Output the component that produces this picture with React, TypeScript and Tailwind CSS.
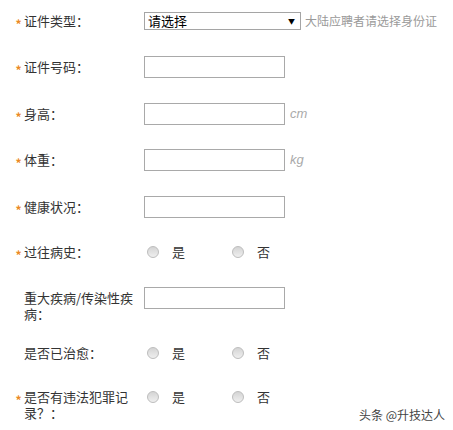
import React from 'react';

const FONT = { fontFamily: '"Noto Sans CJK SC", "Liberation Sans", sans-serif' };

function Star({ show }: { show?: boolean }) {
  return (
    <span className="w-[11px] h-[16px] shrink-0 pt-[3px] text-center text-[12px] leading-[16px] font-bold text-[#eb8a24]">
      {show ? '*' : ''}
    </span>
  );
}

function Label({ text, required }: { text: string; required?: boolean }) {
  return (
    <div className="flex items-start pt-[3px]">
      <Star show={required} />
      <div className="w-[112px] mr-[8px] text-[13px] leading-[16px] text-[#333]">{text}</div>
    </div>
  );
}

function TextInput() {
  return <div className="w-[141px] h-[22px] border border-[#a9a9a9] bg-white" />;
}

function Radio({ label }: { label: string }) {
  return (
    <div className="flex items-center">
      <span className="ml-[3px] w-[12px] h-[12px] rounded-full border border-[#bdbdbd] bg-gradient-to-b from-[#d4d4d4] to-[#efefef]" />
      <span className="ml-[13px] text-[13px] text-[#333]">{label}</span>
    </div>
  );
}

function RadioPair() {
  return (
    <div className="flex items-center h-[22px]">
      <div className="w-[85px]">
        <Radio label="是" />
      </div>
      <Radio label="否" />
    </div>
  );
}

function Unit({ text }: { text: string }) {
  return (
    <span className="ml-[5px] text-[13px] italic text-[#aaa]" style={{ fontFamily: '"Liberation Sans", sans-serif' }}>
      {text}
    </span>
  );
}

export default function App() {
  return (
    <div className="relative w-[453px] h-[430px] overflow-hidden bg-white pl-[13px] pt-[10px]" style={FONT}>
      {/* 证件类型 */}
      <div className="flex items-start">
        <Label text="证件类型：" required />
        <div className="flex items-center h-[22px]">
          <div className="w-[157px] h-[18px] border border-[#a5a5a5] flex items-center justify-between pl-[3px] pr-[5px] text-[13px] text-black">
            <span>请选择</span>
            <span className="text-[7px]">▼</span>
          </div>
          <span className="ml-[4px] text-[12px] text-[#9a9a9a]">大陆应聘者请选择身份证</span>
        </div>
      </div>

      <div className="flex items-start mt-[24px]">
        <Label text="证件号码：" required />
        <TextInput />
      </div>

      <div className="flex items-start mt-[25px]">
        <Label text="身高：" required />
        <div className="flex items-center">
          <TextInput />
          <Unit text="cm" />
        </div>
      </div>

      <div className="flex items-start mt-[24px]">
        <Label text="体重：" required />
        <div className="flex items-center">
          <TextInput />
          <Unit text="kg" />
        </div>
      </div>

      <div className="flex items-start mt-[25px]">
        <Label text="健康状况：" required />
        <TextInput />
      </div>

      <div className="flex items-start mt-[23px]">
        <Label text="过往病史：" required />
        <RadioPair />
      </div>

      <div className="flex items-start mt-[24px]">
        <Label text="重大疾病/传染性疾病：" />
        <TextInput />
      </div>

      <div className="flex items-start mt-[20px]">
        <Label text="是否已治愈：" />
        <RadioPair />
      </div>

      <div className="flex items-start mt-[22px]">
        <Label text="是否有违法犯罪记录？：" required />
        <RadioPair />
      </div>

      {/* watermark */}
      <div className="absolute left-[359px] top-[406px] text-[12px] text-[#444]">头条 @升技达人</div>
    </div>
  );
}
